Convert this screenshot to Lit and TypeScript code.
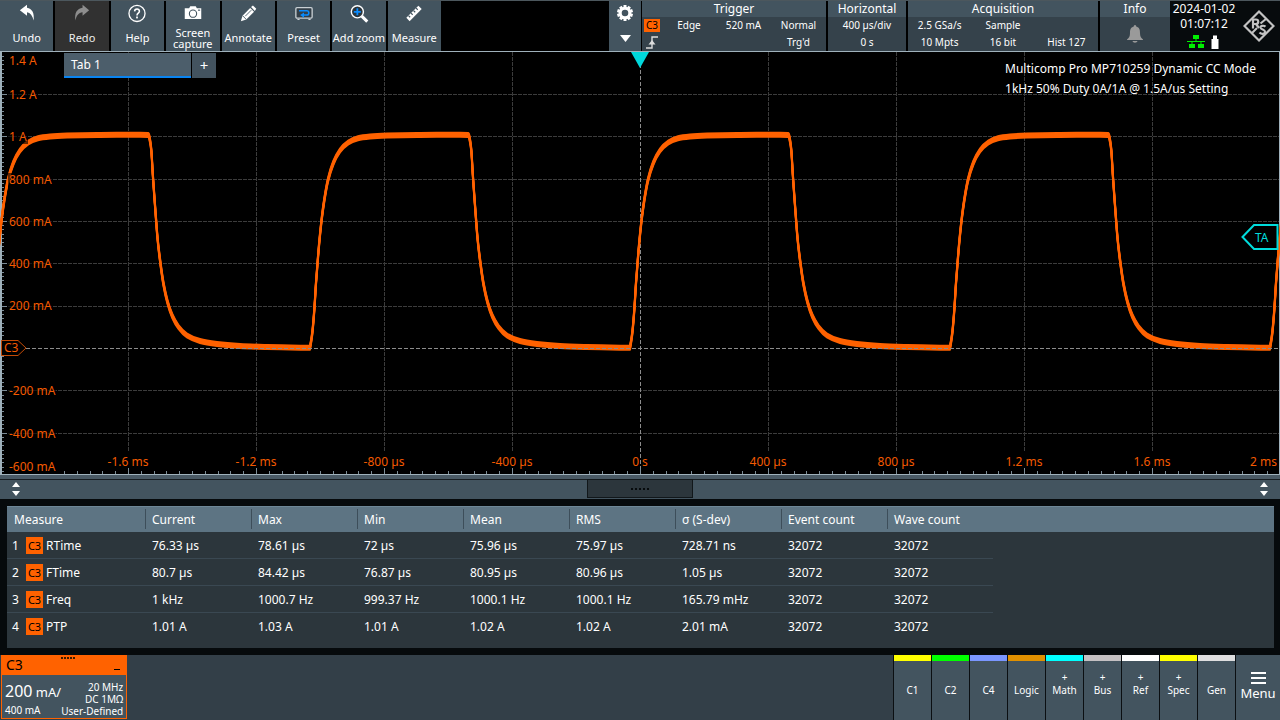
import { LitElement, html, svg, css, nothing } from "lit";
import { customElement, property } from "lit/decorators.js";
import { styleMap } from "lit/directives/style-map.js";

const PLOT_W = 1280;
const PLOT_H = 422;

type Pt = [number, number];

/* One period of the current trace: falling edge, low level, rising edge, high level. */
const PERIOD = 320;
const CYCLE: Pt[] = [
  [148, 83], [149.3, 85], [151.3, 98], [152.9, 124], [155.2, 156], [157.6, 187], [160.4, 211],
  [163.5, 232], [167.5, 250], [172.3, 264], [178.5, 275], [187, 283.5], [200, 289], [217, 292],
  [240, 294], [267, 295], [300, 295.7], [310, 295.7], [312.3, 281], [314.3, 258], [316, 231],
  [317.7, 209], [319.3, 190], [321.7, 167], [324.3, 148], [328, 128], [333.3, 111], [340, 98.5],
  [348.3, 90.5], [358, 86.3], [370, 84.5], [387, 83.6], [420, 83], [460, 82.8],
];

/* Smooth curve through the samples (Catmull-Rom), shifted vertically by offset. */
function tracePath(offset: number): string {
  const pts: Pt[] = [];
  for (let k = -1; k < 4; k++) {
    for (const [x, y] of CYCLE) pts.push([x + k * PERIOD, y + offset]);
  }
  const corner = (i: number) => i % CYCLE.length === 0 || i % CYCLE.length === 17;
  const slope = (i: number): Pt => {
    if (corner(i) || i === pts.length - 1) return [0, 0];
    return [(pts[i + 1][0] - pts[i - 1][0]) / 6, (pts[i + 1][1] - pts[i - 1][1]) / 6];
  };
  let d = `M${pts[0][0]} ${pts[0][1]}`;
  for (let i = 0; i < pts.length - 1; i++) {
    const [ax, ay] = pts[i];
    const [bx, by] = pts[i + 1];
    const s = slope(i);
    const e = slope(i + 1);
    const seg = bx - ax;
    const fit = (v: Pt): Pt => {
      const k = v[0] > seg / 2 ? seg / 2 / v[0] : 1;
      return [v[0] * k, v[1] * k];
    };
    const [s1, s2] = fit(s);
    const [e1, e2] = fit(e);
    d += `C${ax + s1} ${ay + s2} ${bx - e1} ${by - e2} ${bx} ${by}`;
  }
  return d;
}

const Y_LABELS = [
  { text: "1.4 A", y: 9 }, { text: "1.2 A", y: 43 }, { text: "1 A", y: 85 },
  { text: "800 mA", y: 128 }, { text: "600 mA", y: 170 }, { text: "400 mA", y: 212 },
  { text: "200 mA", y: 254 }, { text: "-200 mA", y: 339 }, { text: "-400 mA", y: 382 },
  { text: "-600 mA", y: 415 },
];
const X_LABELS = [
  "-1.6 ms", "-1.2 ms", "-800 µs", "-400 µs", "0 s", "400 µs", "800 µs", "1.2 ms", "1.6 ms",
].map((text, i) => ({ text, x: (i + 1) * 128 }));

@customElement("scope-plot")
class ScopePlot extends LitElement {
  static styles = css`
    :host {
      display: block; position: relative; overflow: hidden; background: #000;
      border: solid #9fb1bb; border-width: 1px 0; color: #f45a00; font-size: 12px;
    }
    .canvas { position: absolute; inset: 0; width: 100%; height: 100%; display: block; }
    .canvas path { vector-effect: non-scaling-stroke; fill: none; }
    .grid { stroke: #3c3c3c; stroke-dasharray: 4 1; }
    .axis { stroke: #8c8c8c; stroke-dasharray: 4 2; }
    .ticks { stroke: #7d8d97; }
    .edge { stroke: #9fb1bb; stroke-width: 2; }
    .trace { stroke: #ff6200; stroke-width: 2; stroke-linejoin: round; }
    .y, .x, .zero, .last { position: absolute; line-height: 14px; white-space: nowrap; }
    .y { left: 8px; padding: 0 1px; background: rgba(0, 0, 0, 0.6); transform: translateY(-50%); }
    .x { bottom: 5px; transform: translateX(-50%); }
    .last { bottom: 5px; right: 3px; }
    .zero { left: 1px; transform: translateY(-50%); width: 27px; height: 17px; }
    .zero svg { position: absolute; inset: 0; }
    .zero span { position: absolute; left: 3px; top: 1px; }
    .trig { position: absolute; top: 0; left: 50%; transform: translateX(-50%); display: block; }
    .ta { position: absolute; right: 1px; transform: translateY(-50%); width: 38px; height: 26px; color: #00dcdc; }
    .ta svg { position: absolute; inset: 0; }
    .ta span { position: absolute; left: 14px; top: 6px; font-size: 12px; line-height: 16px; }
    .tabs { position: absolute; left: 64px; top: 1px; display: flex; gap: 1px; }
    .tab, .plus {
      font: inherit; color: #fff; border: 0; margin: 0; height: 25px; background: #4c5e6b;
    }
    .tab { width: 127px; padding: 0 7px; text-align: left; font-size: 12px; border-bottom: 2px solid #0a84f0; }
    .plus { width: 24px; padding: 0 0 2px; font-size: 15px; background: #43535f; }
    .note {
      position: absolute; right: 24px; top: 7px; margin: 0; color: #fff; font-size: 12px; line-height: 20px;
    }
  `;

  render() {
    const vGrid = Array.from({ length: 9 }, (_, i) => (i + 1) * 128 + 0.5)
      .filter((x) => x !== 640.5).map((x) => `M${x} 0V400`).join("");
    const hGrid = Array.from({ length: 9 }, (_, i) => i)
      .filter((i) => i !== 6).map((i) => `M8 ${Math.round(42 + i * 42.33) + 0.5}H${PLOT_W}`).join("");
    let ticks = "";
    for (let i = 1; i < 100; i++) {
      const x = Math.round(i * 12.8) + 0.5;
      if (x > 60) ticks += `M${x} ${PLOT_H}V${i % 10 ? PLOT_H - 3 : PLOT_H - 6}`;
    }
    for (let i = -9; i < 91; i++) {
      const y = Math.round(42 + i * 4.233) + 0.5;
      ticks += `M2 ${y}H${i % 10 ? 4 : 7}`;
    }
    const pctY = (y: number) => styleMap({ top: `${(y / PLOT_H) * 100}%` });
    return html`
      <svg class="canvas" viewBox="0 0 ${PLOT_W} ${PLOT_H}" preserveAspectRatio="none" aria-hidden="true">
        <path class="grid" d=${vGrid}></path>
        <path class="grid" d=${hGrid}></path>
        <path class="axis" d="M640.5 0V416"></path>
        <path class="ticks" d=${ticks}></path>
        <path class="edge" d="M1 0V${PLOT_H}M1280 0V${PLOT_H}"></path>
        ${[-2, -1, 0, 1, 2].map((o) => svg`<path class="trace" d=${tracePath(o)}></path>`)}
        <path class="axis" d="M26 296.5H${PLOT_W}"></path>
      </svg>
      ${Y_LABELS.map((l) => html`<span class="y" style=${pctY(l.y)}>${l.text}</span>`)}
      ${X_LABELS.map((l) => html`<span class="x" style=${styleMap({ left: `${(l.x / PLOT_W) * 100}%` })}>${l.text}</span>`)}
      <span class="last">2 ms</span>
      <div class="zero" style=${pctY(296)}>
        <svg width="27" height="17" fill="#000" stroke="#c24a06"><path d="M.5 1H17L25 8.500L17 16H.5Z"></path></svg>
        <span>C3</span>
      </div>
      <svg class="trig" width="18" height="16"><path d="M0 0H18L9 16Z" fill="#00d8dc"></path></svg>
      <div class="ta" style=${pctY(185)}>
        <svg width="38" height="26" fill="#000" stroke="#00dcdc" stroke-width="2"><path d="M1.500 13L13 1H36.500V25H13Z"></path></svg>
        <span>TA</span>
      </div>
      <div class="tabs">
        <button class="tab">Tab 1</button><button class="plus" aria-label="Add tab">+</button>
      </div>
      <p class="note">Multicomp Pro MP710259 Dynamic CC Mode<br />1kHz 50% Duty 0A/1A @ 1.5A/us Setting</p>
    `;
  }
}

const ICONS: Record<string, unknown> = {
  undo: svg`<path d="M3.500 6.500L10 1.500V4.300C14.500 5 17 9 16 16C15 11.500 13 9 10 8.500V11.500Z" fill="#fff"/>`,
  redo: svg`<path d="M16.500 6.500L10.500 1.500V4.300C5.500 5 3 9 4 16C4.800 11.500 7 9 10.500 8.500V11.500Z" fill="#8d8d8d"/>`,
  help: svg`<circle cx="10" cy="9.500" r="7.300" fill="none" stroke="#fff" stroke-width="1.200"/>
    <path d="M7.800 7.600C7.900 4.800 12.300 4.800 12.200 7.600C12.200 9.300 10 9.300 10 11.300" fill="none" stroke="#fff" stroke-width="1.400"/><rect x="9.200" y="12.300" width="1.600" height="1.700" fill="#fff"/>`,
  camera: svg`<path d="M2.500 4.800H6.500L7.500 3H12.500L13.500 4.800H17.500V14.500H2.500Z" fill="#fff"/><circle cx="10" cy="9.700" r="3.300" fill="none" stroke="#43545f"/><path d="M14.500 6.500H16.500" stroke="#43545f"/>`,
  pencil: svg`<path d="M3.500 16.500L5 11.500L12 4.500L15.500 8L8.500 15Z" fill="#fff"/><path d="M12.800 3.700L14.500 2.300L17.500 5.300L16.200 7.200Z" fill="#fff"/><path d="M5 11.500L8.500 15M7.500 12L13 6.500" stroke="#43545f" stroke-width=".8"/>`,
  preset: svg`<rect x="2.600" y="4.200" width="14.800" height="9.600" rx="1" fill="#333f48" stroke="#c9d0d4" stroke-width="1.200"/><path d="M4 15H6M14 15H16" stroke="#c9d0d4"/>
    <path d="M5.500 7H12.500C15 7 15 11 12.500 11H9.500" fill="none" stroke="#0a8cff" stroke-width="1.400"/><path d="M10 8.700V13.300L6.500 11Z" fill="#0a8cff"/>`,
  zoom: svg`<circle cx="8.500" cy="8" r="5.500" fill="#2b353c" stroke="#fff" stroke-width="1.300"/><path d="M12.500 12L17.500 17" stroke="#fff" stroke-width="2.800"/><path d="M8.500 4.800V11.200M5.300 8H11.700" stroke="#0a8cff" stroke-width="1.600"/>`,
  ruler: svg`<path d="M3 13.500L14 2.500L17 5.500L6 16.500Z" fill="#fff"/><path d="M5 11.500L6.500 13M7.300 9.200L8.800 10.700M9.600 6.900L11.100 8.400M11.900 4.600L13.400 6.100" stroke="#43545f" stroke-width="1.100"/>`,
};

const TOOLS = [
  { label: "Undo", icon: "undo" }, { label: "Redo", icon: "redo", off: true },
  { label: "Help", icon: "help" }, { label: "Screen capture", icon: "camera" },
  { label: "Annotate", icon: "pencil" }, { label: "Preset", icon: "preset" },
  { label: "Add zoom", icon: "zoom" }, { label: "Measure", icon: "ruler" },
];

@customElement("tool-bar")
class ToolBar extends LitElement {
  static styles = css`
    :host { display: flex; height: 51px; background: #000; box-sizing: border-box; border-top: 1px solid #4c575d; }
    .tools { display: grid; grid-template-columns: repeat(8, 1fr); gap: 2px; width: 441px; }
    button { font: inherit; color: #fff; background: #43545f; border: 0; padding: 0; margin: 0; }
    .tool { display: flex; flex-direction: column; align-items: center; padding-top: 2px; font-size: 11px; line-height: 11px; min-width: 0; }
    .tool.off { background: #313131; color: #eee; }
    .tool svg { flex: none; }
    .cap { flex: 1; display: flex; align-items: center; justify-content: center; padding-bottom: 1px; }
    .cap.wrap { width: 48px; }
    .space { flex: 1; }
    .gear { width: 32px; display: flex; flex-direction: column; align-items: center; gap: 12px; padding-top: 2px; }
    .gear svg { flex: none; }
    .panel { display: flex; flex-direction: column; margin-left: 1px; margin-right: 1px; background: #35424b; color: #fff; border: 0; padding: 0; }
    .panel h2 { margin: 0; font-size: 12px; font-weight: 400; line-height: 16px; background: #43545f; text-align: center; }
    .cells { flex: 1; display: grid; grid-auto-rows: 17px; font-size: 10px; line-height: 17px; text-align: center; white-space: nowrap; }
    .trigger { width: 184px; }
    .trigger .cells { grid-template-columns: 20px 54px 55px 55px; }
    .horizontal { width: 78px; }
    .acq { width: 190px; }
    .acq .cells { grid-template-columns: repeat(3, 1fr); }
    .info { width: 70px; margin-right: 0; }
    .bell { flex: 1; display: flex; align-items: center; justify-content: center; }
    .chip { align-self: center; justify-self: center; width: 16px; line-height: 13px; background: #ff6200; color: #000; }
    .slope { align-self: center; justify-self: center; display: block; }
    .clock { width: 110px; display: flex; background: #070b0d; color: #fff; font-size: 12px; line-height: 15px; }
    .when { width: 68px; text-align: center; white-space: nowrap; }
    .when time { display: block; }
    .stat { display: flex; justify-content: center; gap: 6px; margin-top: 4px; padding-right: 3px; }
    .logo { flex: 1; display: flex; align-items: center; justify-content: center; }
  `;

  render() {
    const teeth = Array.from({ length: 10 }, (_, i) => svg`<rect x="-1.500" y="-8" width="3" height="4" fill="#fff" transform="rotate(${i * 36})"/>`);
    return html`
      <div class="tools">
        ${TOOLS.map((t) => html`
          <button class="tool ${t.off ? "off" : ""}">
            <svg width="22" height="22" viewBox="0 0 20 20" aria-hidden="true">${ICONS[t.icon]}</svg>
            <span class="cap ${t.label.startsWith("Screen") ? "wrap" : ""}">${t.label}</span>
          </button>`)}
      </div>
      <div class="space"></div>
      <button class="gear" aria-label="Settings">
        <svg width="18" height="20" viewBox="-9 -10 18 20">${teeth}<circle r="4.800" fill="none" stroke="#fff" stroke-width="3"/></svg>
        <svg width="11" height="7"><path d="M0 0H11L5.500 7Z" fill="#fff"/></svg>
      </button>
      <section class="panel trigger">
        <h2>Trigger</h2>
        <div class="cells">
          <span class="chip">C3</span><span>Edge</span><span>520 mA</span><span>Normal</span>
          <svg class="slope" width="14" height="13" fill="none" stroke="#ddd" stroke-width="1.400"><path d="M1 12H7V1H13"/><path d="M3.500 8.500L7 4L10.500 8.500Z" fill="#ddd" stroke="none"/></svg>
          <span></span><span></span><span>Trg'd</span>
        </div>
      </section>
      <section class="panel horizontal">
        <h2>Horizontal</h2>
        <div class="cells"><span>400 µs/div</span><span>0 s</span></div>
      </section>
      <section class="panel acq">
        <h2>Acquisition</h2>
        <div class="cells">
          <span>2.5 GSa/s</span><span>Sample</span><span></span>
          <span>10 Mpts</span><span>16 bit</span><span>Hist 127</span>
        </div>
      </section>
      <section class="panel info">
        <h2>Info</h2>
        <div class="bell">
          <svg width="16" height="18"><path d="M8 0C9 0 9.200 .8 9.200 1.500C12.500 2.300 13 5 13 8C13 11.500 14 13 16 14.500V15H0V14.500C2 13 3 11.500 3 8C3 5 3.500 2.300 6.800 1.500C6.800 .8 7 0 8 0ZM5.500 16H10.500C10 18.300 6 18.300 5.500 16Z" fill="#9a9a9a"/></svg>
        </div>
      </section>
      <div class="clock">
        <div class="when">
          <time>2024-01-02</time><time>01:07:12</time>
          <div class="stat">
            <svg width="18" height="14"><path d="M6 0H12V4H6ZM2 9H8V13H2ZM11 9H17V13H11Z" fill="#00f000"/><path d="M9 4V7M0 6.500H18M5 7V9M14 7V9" stroke="#00f000" fill="none"/></svg>
            <svg width="8" height="14"><path d="M2 .5H6V4H7.500V14H.5V4H2Z" fill="#fff"/></svg>
          </div>
        </div>
        <div class="logo">
          <svg width="32" height="34" viewBox="0 0 32 34" fill="none" stroke="#c2c2c2">
            <path d="M16 2.500L30.500 17L16 31.500L1.500 17Z" stroke-width="2.200"/>
            <path d="M8.500 24.500L14 19M17.500 14.500L23.500 9.500" stroke-width="2"/>
            <path d="M10 19.500V10.500H13C16 10.500 16 15 13 15H10M13 15L16 19" stroke-width="2.200"/>
            <path d="M22.500 17.700C20.500 16 17.300 16.800 17.500 18.700C17.800 20.800 22 20.300 22 22.700C22 25.200 18.500 25.500 16.500 23.500" stroke-width="2.200"/>
          </svg>
        </div>
      </div>
    `;
  }
}

const HEADS = ["Current", "Max", "Min", "Mean", "RMS", "σ (S-dev)", "Event count", "Wave count"];
const ROWS = [
  { name: "RTime", v: ["76.33 µs", "78.61 µs", "72 µs", "75.96 µs", "75.97 µs", "728.71 ns", "32072", "32072"] },
  { name: "FTime", v: ["80.7 µs", "84.42 µs", "76.87 µs", "80.95 µs", "80.96 µs", "1.05 µs", "32072", "32072"] },
  { name: "Freq", v: ["1 kHz", "1000.7 Hz", "999.37 Hz", "1000.1 Hz", "1000.1 Hz", "165.79 mHz", "32072", "32072"] },
  { name: "PTP", v: ["1.01 A", "1.03 A", "1.01 A", "1.02 A", "1.02 A", "2.01 mA", "32072", "32072"] },
];

@customElement("measure-panel")
class MeasurePanel extends LitElement {
  static styles = css`
    :host { display: block; background: #060a0c; }
    .split {
      height: 24px; box-sizing: border-box; border-top: 4px solid #4a5a65; background: #43545f;
      box-shadow: inset 0 1px #161c20; display: flex; align-items: center; justify-content: space-between; padding: 0 12px 1px;
    }
    .split button { border: 0; padding: 0; margin: 0; background: none; display: flex; }
    .split .handle {
      width: 106px; height: 19px; background: #2c363c; border: 1px solid #11171a;
      align-items: center; justify-content: center; gap: 2px;
    }
    .dot { width: 2px; height: 2px; background: #060a0c; }
    .frame { margin: 7px 6px 7px 7px; height: 142px; background: #2c363c; }
    table { width: 100%; border-collapse: collapse; table-layout: fixed; font-size: 12px; color: #fff; }
    .first { width: 138px; }
    .col { width: 106px; }
    th, td { text-align: left; font-weight: 400; padding: 0 0 0 7px; white-space: nowrap; line-height: 16px; }
    thead tr { height: 26px; background: #5d7483; box-shadow: inset 0 1px #6e8797; }
    tbody tr { height: 27px; }
    thead th { padding-top: 2px; }
    thead th + th { background: linear-gradient(#3d4e5a, #3d4e5a) 0 3px / 1px 20px no-repeat; }
    tbody tr:not(:last-child) td:not(.fill) { box-shadow: inset 0 -1px #3a4852; }
    .name { display: flex; align-items: center; }
    .name span { width: 14px; margin-left: -2px; }
    .name b { font-weight: 400; font-size: 11px; line-height: 17px; width: 17px; margin-right: 3px; text-align: center; background: #ff6200; color: #000; }
  `;

  render() {
    const arrows = html`<svg width="8" height="14"><path d="M4 0L8 5H0ZM0 9H8L4 14Z" fill="#fff"/></svg>`;
    return html`
      <div class="split">
        <button aria-label="Resize left">${arrows}</button>
        <button class="handle" aria-label="Drag to resize">
          ${[0, 1, 2, 3, 4].map(() => html`<i class="dot"></i>`)}
        </button>
        <button aria-label="Resize right">${arrows}</button>
      </div>
      <div class="frame">
        <table>
          <colgroup><col class="first" />${HEADS.map(() => html`<col class="col" />`)}<col /></colgroup>
          <thead><tr><th>Measure</th>${HEADS.map((h) => html`<th>${h}</th>`)}<td></td></tr></thead>
          <tbody>
            ${ROWS.map((r, i) => html`<tr>
              <td><div class="name"><span>${i + 1}</span><b>C3</b>${r.name}</div></td>
              ${r.v.map((v) => html`<td>${v}</td>`)}<td class="fill"></td>
            </tr>`)}
          </tbody>
        </table>
      </div>
    `;
  }
}

const SOURCES = [
  { label: "C1", color: "#ffff00" }, { label: "C2", color: "#00ff00" }, { label: "C4", color: "#7a96ff" },
  { label: "Logic", color: "#e09000" }, { label: "Math", color: "#00ffff", add: true },
  { label: "Bus", color: "#c4c0c2", add: true }, { label: "Ref", color: "#ffffff", add: true },
  { label: "Spec", color: "#ffff00", add: true }, { label: "Gen", color: "#dededf" },
];

@customElement("source-button")
class SourceButton extends LitElement {
  @property() label = "";
  @property() color = "#fff";
  @property({ type: Boolean }) add = false;
  static styles = css`
    :host { display: flex; }
    button {
      flex: 1; font: inherit; color: #fff; font-size: 10px; line-height: 13px; padding: 0; margin: 0; border: 0;
      background: #43545f; display: flex; flex-direction: column; align-items: center;
    }
    .bar { align-self: stretch; height: 6px; margin-bottom: 10px; }
    .plus { height: 13px; }
  `;
  render() {
    return html`<button>
      <span class="bar" style=${styleMap({ background: this.color })}></span>
      <span class="plus">${this.add ? "+" : nothing}</span><span>${this.label}</span>
    </button>`;
  }
}

@customElement("channel-bar")
class ChannelBar extends LitElement {
  static styles = css`
    :host { display: flex; height: 65px; background: #333f48; color: #fff; }
    .channel { width: 126px; margin: 0 0 1px 1px; box-sizing: border-box; border: 1px solid #ff6200; border-top: 0; background: #43545f; display: flex; flex-direction: column; }
    .head { background: #ff6200; color: #000; height: 20px; font-size: 14px; line-height: 20px; padding: 0 6px 0 4px; display: flex; justify-content: space-between; }
    .dots { display: flex; gap: 1px; padding-top: 2px; }
    .dots i { width: 2px; height: 2px; background: #3a1a00; }
    .min { width: 6px; height: 1px; background: #000; align-self: flex-end; margin-bottom: 5px; }
    .body { flex: 1; display: flex; justify-content: space-between; align-items: flex-end; padding: 0 3px 1px; font-size: 10px; line-height: 13px; white-space: nowrap; }
    .side { display: flex; flex-direction: column; }
    .side.right { align-items: flex-end; line-height: 12px; }
    .scale { font-size: 13px; line-height: 24px; }
    .scale b { font-weight: 400; font-size: 16px; }
    .space { flex: 1; }
    .sources { display: grid; grid-template-columns: repeat(9, 37px); gap: 1px; background: #0b0f12; padding: 0 1px; }
    .menu {
      width: 44px; font: inherit; font-size: 13px; line-height: 16px; color: #fff; background: #43545f; border: 0; margin: 0;
      padding: 0 0 3px; display: flex; flex-direction: column; align-items: center; justify-content: center; gap: 1px;
    }
  `;

  render() {
    return html`
      <section class="channel">
        <div class="head"><span>C3</span><span class="dots">${[0, 1, 2, 3, 4].map(() => html`<i></i>`)}</span><span class="min"></span></div>
        <div class="body">
          <div class="side"><span class="scale"><b>200</b> mA/</span><span>400 mA</span></div>
          <div class="side right"><span>20 MHz</span><span>DC 1MΩ</span><span>User-Defined</span></div>
        </div>
      </section>
      <div class="space"></div>
      <div class="sources">
        ${SOURCES.map((s) => html`<source-button .label=${s.label} .color=${s.color} .add=${!!s.add}></source-button>`)}
      </div>
      <button class="menu">
        <svg width="15" height="12"><path d="M0 1H15M0 6H15M0 11H15" stroke="#fff" stroke-width="2"/></svg>Menu
      </button>
    `;
  }
}

@customElement("app-root")
class AppRoot extends LitElement {
  static styles = css`
    :host {
      display: flex; flex-direction: column; min-height: 100vh; background: #000;
      font-family: "Noto Sans", "Open Sans", sans-serif;
    }
    .plot { flex: 1; min-height: 240px; }
  `;
  render() {
    return html`
      <tool-bar></tool-bar>
      <scope-plot class="plot"></scope-plot>
      <measure-panel></measure-panel>
      <channel-bar></channel-bar>
    `;
  }
}
